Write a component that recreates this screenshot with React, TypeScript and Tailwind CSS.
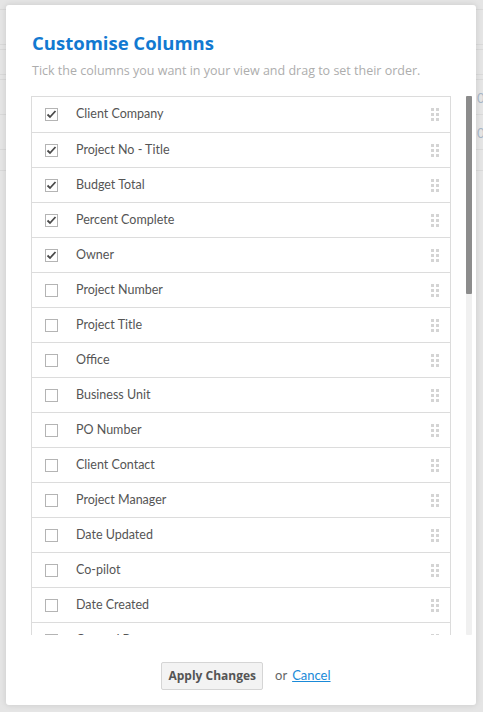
import React from "react";

const items: { label: string; checked: boolean }[] = [
  { label: "Client Company", checked: true },
  { label: "Project No - Title", checked: true },
  { label: "Budget Total", checked: true },
  { label: "Percent Complete", checked: true },
  { label: "Owner", checked: true },
  { label: "Project Number", checked: false },
  { label: "Project Title", checked: false },
  { label: "Office", checked: false },
  { label: "Business Unit", checked: false },
  { label: "PO Number", checked: false },
  { label: "Client Contact", checked: false },
  { label: "Project Manager", checked: false },
  { label: "Date Updated", checked: false },
  { label: "Co-pilot", checked: false },
  { label: "Date Created", checked: false },
  { label: "Created By", checked: false },
  { label: "Stage", checked: false },
];

function Check({ checked }: { checked: boolean }) {
  return (
    <svg width="13" height="13" viewBox="0 0 13 13" className="shrink-0">
      <rect x="0.5" y="0.5" width="12" height="12" fill="#fff" stroke="#b4b4b4" />
      {checked && (
        <path d="M2.5 6.5 L5 9 L10.5 3" fill="none" stroke="#4a4a4a" strokeWidth="1.8" />
      )}
    </svg>
  );
}

function Grip() {
  return (
    <div className="grid grid-cols-2 gap-[2px] mr-[11px]">
      {[0, 1, 2, 3, 4, 5].map((i) => (
        <div key={i} className="w-[3px] h-[3px] bg-[#d4d4d4]" />
      ))}
    </div>
  );
}

export default function App() {
  const bgLines = [9, 44, 49, 74, 79, 114, 149, 170];
  return (
    <div
      className="relative w-[483px] h-[712px] bg-[#e5e5e5] overflow-hidden"
      style={{ fontFamily: "Lato, 'Open Sans', sans-serif" }}
    >
      {bgLines.map((y) => (
        <div key={y} className="absolute left-0 right-0 h-px bg-[#d9d9d9]" style={{ top: y }} />
      ))}
      <div className="absolute left-[477px] top-[89px] text-[13px] text-[#a9b8c8]">0</div>
      <div className="absolute left-[477px] top-[124px] text-[13px] text-[#a9b8c8]">0</div>

      <div className="absolute left-[6px] top-[5px] w-[470px] h-[700px] bg-white rounded-[3px] shadow-[0_0_6px_rgba(0,0,0,0.12)] flex flex-col">
        <div className="pl-[26px] pt-[26px]" style={{ fontFamily: "'Open Sans', sans-serif" }}>
          <h1 className="text-[18.5px] font-bold text-[#1279d1] leading-[24px]">Customise Columns</h1>
          <p className="mt-[7px] text-[12.5px] text-[#adadad] leading-[18px]">
            Tick the columns you want in your view and drag to set their order.
          </p>
        </div>
        <div className="mt-[16px] ml-[25px] flex h-[539px] overflow-hidden">
          <div className="w-[420px] h-[539px] overflow-hidden">
            <div className="border border-[#dcdcdc]">
              {items.map((it, i) => (
                <div
                  key={it.label}
                  className={
                    "h-[35px] flex items-center " + (i > 0 ? "border-t border-[#dcdcdc]" : "")
                  }
                >
                  <div className="ml-[13px]">
                    <Check checked={it.checked} />
                  </div>
                  <span className="ml-[18px] text-[12.5px] text-[#555] flex-1">{it.label}</span>
                  <Grip />
                </div>
              ))}
            </div>
          </div>
          <div className="ml-[15px] w-[6px] h-[539px] bg-[#f0f0f0] rounded-[1px]">
            <div className="w-[6px] h-[198px] bg-[#8c8c8c] rounded-[1px]" />
          </div>
        </div>
        <div className="mt-[27px] flex items-center justify-center pl-[10px]">
          <button className="h-[28px] px-[6px] bg-[#f3f3f3] border border-[#d5d5d5] rounded-[2px] text-[12px] font-bold text-[#555]" style={{ fontFamily: "'Open Sans', sans-serif" }}>
            Apply Changes
          </button>
          <span className="ml-[12px] text-[13px] text-[#666]">or</span>
          <a className="ml-[5px] text-[13px] text-[#1a8ad8] underline cursor-pointer">Cancel</a>
        </div>
      </div>
    </div>
  );
}
